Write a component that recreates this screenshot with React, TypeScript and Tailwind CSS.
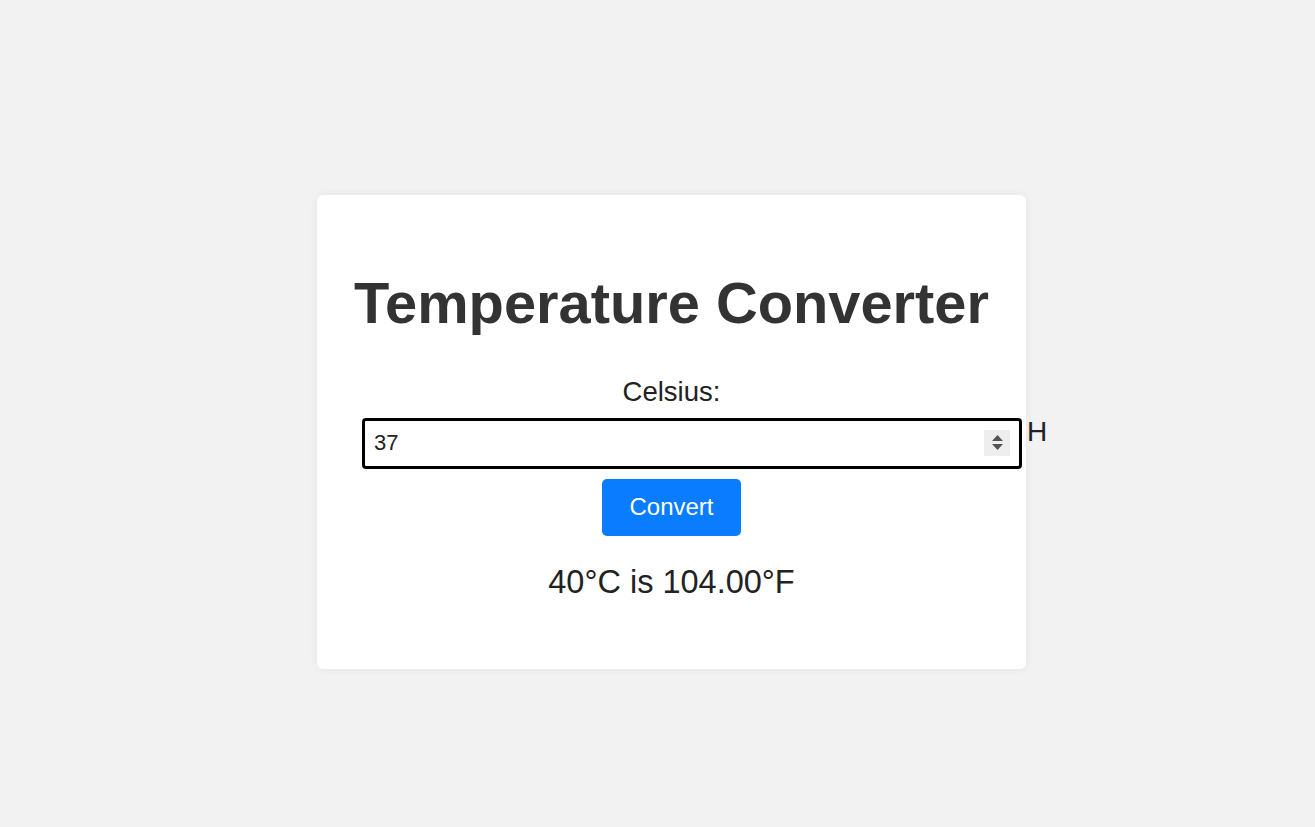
import { useState } from "react";

export default function App() {
  const [celsius, setCelsius] = useState("37");

  return (
    <div className="flex min-h-screen items-center justify-center bg-[#f2f2f2] pl-[28px] font-['Liberation_Sans',Arial,sans-serif]">
      <div className="mt-[36px] w-[709px] rounded-[6px] bg-white px-[45px] pb-[68px] pt-[73px] text-center shadow-[0_0_10px_rgba(0,0,0,0.06)]">
        <h1 className="-mx-[30px] whitespace-nowrap text-[57.8px] font-bold leading-[70px] text-[#333]">
          Temperature Converter
        </h1>

        <label className="mt-[38px] block text-[27.5px] leading-[31px] text-[#222]">
          Celsius:
        </label>

        <div className="mt-[11px] flex items-start whitespace-nowrap">
          <div className="relative flex h-[51px] w-[660px] shrink-0 items-center rounded-[4px] border-[3px] border-black bg-white">
            <input
              type="text"
              value={celsius}
              onChange={(e) => setCelsius(e.target.value)}
              className="h-full w-full bg-transparent pl-[9px] text-[22px] text-[#222] outline-none"
            />
            <div className="absolute right-[9px] top-[9px] flex h-[26px] w-[26px] flex-col items-center justify-center gap-[3px] bg-[#eeeeee]">
              <svg width="11" height="6" viewBox="0 0 11 6">
                <path d="M5.5 0 L11 6 L0 6 Z" fill="#555" />
              </svg>
              <svg width="11" height="6" viewBox="0 0 11 6">
                <path d="M0 0 L11 0 L5.5 6 Z" fill="#555" />
              </svg>
            </div>
          </div>
          <span className="ml-[5px] mt-[-1px] text-[28px] leading-[30px] text-[#222]">H</span>
        </div>

        <button className="mt-[10px] h-[57px] w-[139px] rounded-[5px] bg-[#0a7cff] text-[24px] text-white">
          Convert
        </button>

        <p className="mt-[27px] text-[32.5px] leading-[38px] text-[#222]">40°C is 104.00°F</p>
      </div>
    </div>
  );
}
